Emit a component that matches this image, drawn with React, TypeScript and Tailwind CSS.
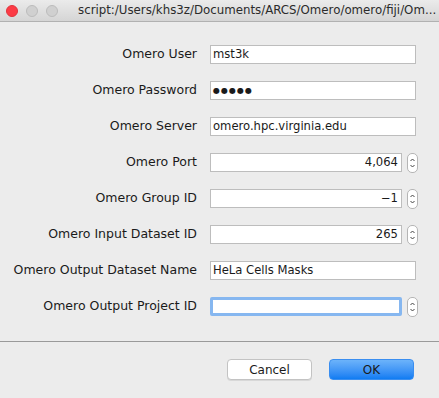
const fields = [
  { label: 'Omero User', value: 'mst3k', kind: 'text' },
  { label: 'Omero Password', value: '●●●●●', kind: 'password' },
  { label: 'Omero Server', value: 'omero.hpc.virginia.edu', kind: 'text' },
  { label: 'Omero Port', value: '4,064', kind: 'number' },
  { label: 'Omero Group ID', value: '−1', kind: 'number' },
  { label: 'Omero Input Dataset ID', value: '265', kind: 'number' },
  { label: 'Omero Output Dataset Name', value: 'HeLa Cells Masks', kind: 'text' },
  { label: 'Omero Output Project ID', value: '', kind: 'focus' },
]

const Stepper = () => (
  <div className="ml-[5px] w-[11px] h-[20px] rounded-[5px] border border-[#b5b5b5] bg-white flex flex-col items-center justify-center">
    <svg width="7" height="14" viewBox="0 0 7 14" fill="none" stroke="#444" strokeWidth="1">
      <path d="M1.5 5 L3.5 3 L5.5 5" />
      <path d="M1.5 9 L3.5 11 L5.5 9" />
    </svg>
  </div>
)

export default function App() {
  return (
    <div className="w-[439px] h-[398px] overflow-hidden bg-[#ececec] flex flex-col text-[12.5px] text-[#1a1a1a] font-['DejaVu_Sans',sans-serif]">
      <div className="h-[22px] shrink-0 flex items-center bg-gradient-to-b from-[#ebebeb] to-[#d5d5d5] border-b border-[#b1b1b1]">
        <div className="flex gap-[8px] pl-[6px]">
          <span className="w-[12px] h-[12px] rounded-full bg-[#fc3b45] border border-[#e0343c]" />
          <span className="w-[12px] h-[12px] rounded-full bg-[#d0d0d0] border border-[#bcbcbc]" />
          <span className="w-[12px] h-[12px] rounded-full bg-[#d0d0d0] border border-[#bcbcbc]" />
        </div>
        <span className="ml-[20px] whitespace-nowrap text-[11.8px] text-[#2b2b2b]">
          script:/Users/khs3z/Documents/ARCS/Omero/omero/fiji/Om...
        </span>
      </div>

      <div className="flex flex-col gap-[17px] pt-[23px]">
        {fields.map((f) => (
          <div key={f.label} className="flex items-center h-[19px]">
            <div className="w-[197px] text-right whitespace-nowrap">{f.label}</div>
            <div className="ml-[13px] flex items-center text-[11.6px]">
              {f.kind === 'text' && (
                <div className="w-[206px] h-[19px] bg-white border border-[#bdbdbd] px-[2px] flex items-center whitespace-nowrap">
                  {f.value}
                </div>
              )}
              {f.kind === 'password' && (
                <div className="w-[206px] h-[19px] bg-white border border-[#bdbdbd] px-[2px] flex items-center whitespace-nowrap text-[8px] tracking-[1px]">
                  {f.value}
                </div>
              )}
              {f.kind === 'number' && (
                <>
                  <div className="w-[192px] h-[19px] bg-white border border-[#bdbdbd] px-[3px] flex items-center justify-end">
                    {f.value}
                  </div>
                  <Stepper />
                </>
              )}
              {f.kind === 'focus' && (
                <>
                  <div className="w-[192px] h-[19px] bg-white border-[3px] border-[#86b7f0] rounded-[2px]" />
                  <Stepper />
                </>
              )}
            </div>
          </div>
        ))}
      </div>

      <div className="mt-[25px] border-t border-[#9a9a9a]" />
      <div className="flex justify-end gap-[17px] pr-[25px] pt-[17px] text-[12px]">
        <button className="w-[85px] h-[21px] rounded-[4px] bg-white border border-[#c3c3c3] shadow-[0_1px_0_#d8d8d8] leading-none">
          Cancel
        </button>
        <button className="w-[85px] h-[21px] rounded-[4px] bg-gradient-to-b from-[#6cb3fa] to-[#0d7cf2] border border-[#3a8ef0] leading-none">
          OK
        </button>
      </div>
    </div>
  )
}
